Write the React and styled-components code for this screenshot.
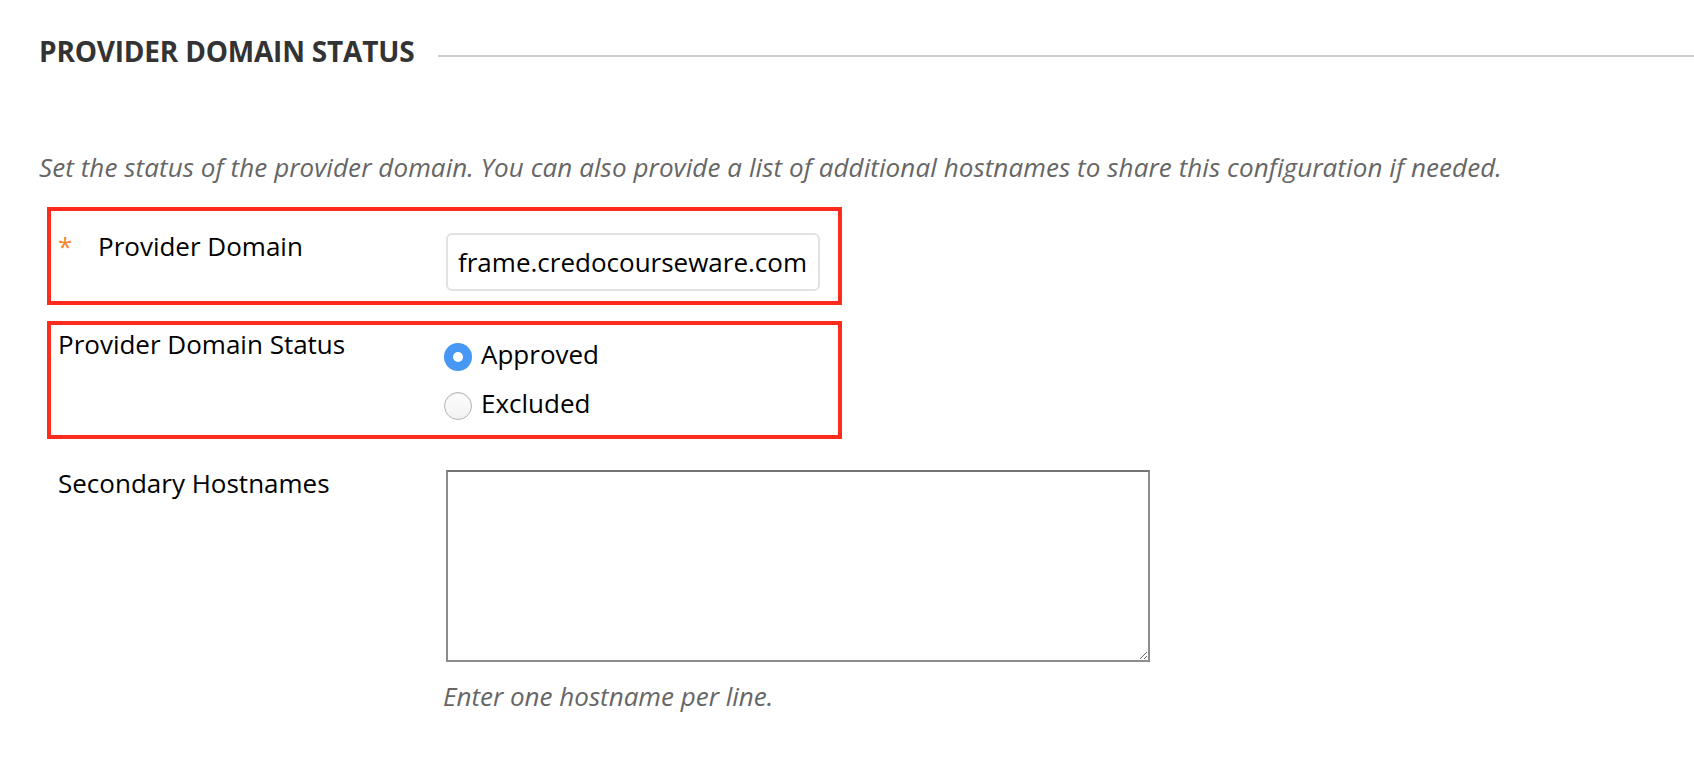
import React from 'react';
import styled, {createGlobalStyle, css} from 'styled-components';

const GlobalStyle = createGlobalStyle`
    body {
        margin: 0;
        background: #fff;
        font-family: "Open Sans", "Liberation Sans", sans-serif;
    }
`;

const Page = styled.div`
    padding: 32px 0 40px 39px;
`;
const SectionHeader = styled.div`
    display: flex;
    align-items: center;
`;
const SectionTitle = styled.h2`
    margin: 0;
    font-size: 28px;
    line-height: 38px;
    font-weight: 700;
    letter-spacing: -0.2px;
    color: #333;
    text-transform: uppercase;
    white-space: nowrap;
`;
const Rule = styled.div`
    flex: 1;
    height: 2px;
    margin: 10px 0 0 24px;
    background: #cdcdcd;
`;
const Instructions = styled.p`
    margin: 79px 0 22px;
    font-size: 26px;
    line-height: 36px;
    font-style: italic;
    letter-spacing: 0.08px;
    color: #666;
    white-space: nowrap;
`;
const FieldRow = styled.div`
    display: grid;
    grid-template-columns: 388px auto;
    box-sizing: border-box;
    width: 795px;
    margin: 0 0 16px 8px;
    padding: ${props => props.$pad};
    border: 4px solid ${props => props.$highlight ? '#ff2b1d' : 'transparent'};
`;
const Label = styled.div`
    display: flex;
    font-size: 26px;
    line-height: 36px;
    color: #000;
`;
const Required = styled.span`
    width: 40px;
    color: #f5852c;
`;
const Control = styled.div`
    padding-top: ${props => props.$offset || 0}px;
`;
const TextInput = styled.input`
    box-sizing: border-box;
    width: 374px;
    height: 58px;
    padding: 0 10px;
    border: 2px solid #e2e2e2;
    border-radius: 6px;
    font-family: inherit;
    font-size: 26px;
    color: #000;
    outline: none;
`;
const RadioGroup = styled.div`
    display: flex;
    flex-direction: column;
    gap: 13px;
`;
const RadioOption = styled.label`
    display: flex;
    align-items: flex-start;
    gap: 9px;
    font-size: 26px;
    line-height: 36px;
    color: #000;
`;
const RadioDot = styled.span`
    position: relative;
    box-sizing: border-box;
    flex: none;
    width: 28px;
    height: 28px;
    margin: 7px 0 0 -2px;
    border-radius: 50%;
    ${props => props.$checked ? css`
        background: #4797f4;
        &::after {
            content: '';
            position: absolute;
            left: 9px;
            top: 9px;
            width: 10px;
            height: 10px;
            border-radius: 50%;
            background: #fff;
        }
    ` : css`
        border: 1px solid #b4b4b4;
        background: linear-gradient(#fdfdfd, #f2f2f2);
        box-shadow: inset 0 1px 1px rgba(0, 0, 0, 0.08);
    `}
`;
const TextArea = styled.textarea`
    display: block;
    box-sizing: border-box;
    width: 704px;
    height: 192px;
    border: 2px solid #8c8c8c;
    border-top-color: #747474;
    font-family: inherit;
    font-size: 26px;
    outline: none;
`;
const HelpText = styled.div`
    margin: 16px 0 0 -3px;
    font-size: 26px;
    line-height: 36px;
    font-style: italic;
    color: #666;
`;

const statuses = [
    {value: 'approved', label: 'Approved'},
    {value: 'excluded', label: 'Excluded'},
];

export default function App() {
    const [status, setStatus] = React.useState('approved');

    return (
        <Page>
            <GlobalStyle />
            <SectionHeader>
                <SectionTitle>Provider Domain Status</SectionTitle>
                <Rule />
            </SectionHeader>
            <Instructions>
                Set the status of the provider domain. You can also provide a list of additional hostnames to share this configuration if needed.
            </Instructions>

            <FieldRow $highlight $pad="17px 7px 10px">
                <Label><Required>*</Required>Provider Domain</Label>
                <Control $offset={5}>
                    <TextInput type="text" defaultValue="frame.credocourseware.com" />
                </Control>
            </FieldRow>

            <FieldRow $highlight $pad="1px 7px 14px">
                <Label>Provider Domain Status</Label>
                <Control $offset={10}>
                    <RadioGroup>
                        {statuses.map(s => (
                            <RadioOption key={s.value} onClick={() => setStatus(s.value)}>
                                <RadioDot $checked={status === s.value} />
                                {s.label}
                            </RadioOption>
                        ))}
                    </RadioGroup>
                </Control>
            </FieldRow>

            <FieldRow $pad="6px 7px 0">
                <Label>Secondary Hostnames</Label>
                <Control $offset={5}>
                    <TextArea />
                    <HelpText>Enter one hostname per line.</HelpText>
                </Control>
            </FieldRow>
        </Page>
    );
}
